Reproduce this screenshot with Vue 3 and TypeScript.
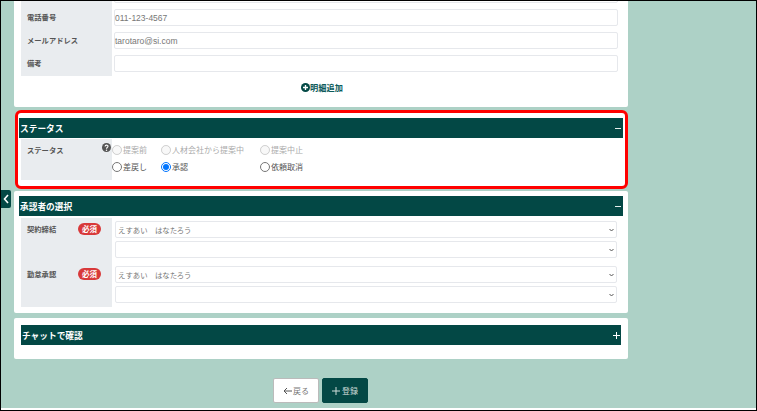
<script setup lang="ts">
const contacts: { label: string; value: string }[] = [
  { label: '電話番号', value: '011-123-4567' },
  { label: 'メールアドレス', value: 'tarotaro@si.com' },
  { label: '備考', value: '' },
]
const radios: { label: string; width: number; disabled: boolean; checked: boolean }[] = [
  { label: '提案前', width: 49, disabled: true, checked: false },
  { label: '人材会社から提案中', width: 99, disabled: true, checked: false },
  { label: '提案中止', width: 60, disabled: true, checked: false },
  { label: '差戻し', width: 49, disabled: false, checked: false },
  { label: '承認', width: 99, disabled: false, checked: true },
  { label: '依頼取消', width: 60, disabled: false, checked: false },
]
const approvers: string[] = ['契約締結', '勤怠承認']
</script>

<template>
  <div class="screen">
    <button class="side-tab" aria-label="閉じる">
      <svg width="6" height="10" viewBox="0 0 6 10"><path d="M5 1 1.5 5 5 9" fill="none" stroke="#fff" stroke-width="1.6" /></svg>
    </button>
    <main class="column">
      <section class="card contact-card">
        <div class="rows">
          <div class="labels contact-labels">
            <span v-for="c in contacts" :key="c.label" class="label-text contact-label">{{ c.label }}</span>
          </div>
          <div class="inputs">
            <input class="field" type="text" value="" />
            <input v-for="c in contacts" :key="c.label" class="field" type="text" :value="c.value" />
          </div>
        </div>
        <div class="add-row">
          <svg width="9" height="9" viewBox="0 0 10 10"><circle cx="5" cy="5" r="5" fill="#044a46" /><path d="M5 2.2v5.6M2.2 5h5.6" stroke="#fff" stroke-width="1.5" /></svg>
          <span>明細追加</span>
        </div>
      </section>

      <section class="card status-card">
        <header class="bar"><span>ステータス</span><span class="bar-sign minus"></span></header>
        <div class="status-body">
          <div class="labels status-label">
            <span class="label-text">ステータス</span>
            <svg class="help" width="9" height="9" viewBox="0 0 10 10"><circle cx="5" cy="5" r="5" fill="#555" /><path d="M3.4 3.8C3.5 1.9 6.7 1.9 6.7 3.7 6.7 5 5 5 5 6.3" fill="none" stroke="#fff" stroke-width="1.2" /><circle cx="5" cy="8" r=".8" fill="#fff" /></svg>
          </div>
          <div class="radios">
            <label v-for="r in radios" :key="r.label" class="radio" :class="{ off: r.disabled }" :style="{ width: r.width + 'px' }">
              <input type="radio" name="status" :disabled="r.disabled" :checked="r.checked" />
              <span>{{ r.label }}</span>
            </label>
          </div>
        </div>
      </section>

      <section class="card approver-card">
        <header class="bar"><span>承認者の選択</span><span class="bar-sign minus"></span></header>
        <div class="approver-body">
          <div v-for="a in approvers" :key="a" class="approver">
            <div class="labels approver-label">
              <span class="label-text">{{ a }}</span>
              <span class="badge">必須</span>
            </div>
            <div class="selects">
              <select class="field pick"><option>えすあい　はなたろう</option></select>
              <select class="field pick"><option></option></select>
            </div>
          </div>
        </div>
      </section>

      <section class="card chat-card">
        <header class="bar chat-bar"><span>チャットで確認</span><span class="bar-sign plus"></span></header>
      </section>

      <footer class="actions">
        <button class="btn back">
          <svg width="9" height="8" viewBox="0 0 9 8"><path d="M9 4H1M4 1 1 4l3 3" fill="none" stroke="#555" stroke-width="1" /></svg>
          <span>戻る</span>
        </button>
        <button class="btn save">
          <svg width="8" height="8" viewBox="0 0 8 8"><path d="M4 0v8M0 4h8" stroke="#cfdcd9" stroke-width="1" /></svg>
          <span>登録</span>
        </button>
      </footer>
    </main>
  </div>
</template>

<style scoped>
.screen {
  box-sizing: border-box;
  position: relative;
  width: 757px;
  height: 411px;
  overflow: hidden;
  background: #add1c6;
  border: 1px solid #000;
  box-shadow: inset 0 -2px 0 #fff;
  font-family: "Noto Sans CJK JP", "Noto Sans", sans-serif;
  color: #555;
}
.column {
  display: flex;
  flex-direction: column;
  width: 614px;
  margin: -16px 0 0 13px;
}
.card {
  box-sizing: border-box;
  background: #fff;
  border-radius: 2px;
}
.contact-card { height: 122px; padding: 11px 5px 0 7px; }
.rows { display: flex; gap: 2px; align-items: flex-start; }
.labels { background: #e9ecef; width: 91px; box-sizing: border-box; }
.contact-labels {
  display: flex;
  flex-direction: column;
  flex: none;
  padding-top: 10px;
  height: 80px;
}
.contact-label { flex: none; height: 23px; line-height: 23px; }
.inputs { display: flex; flex-direction: column; gap: 6px; width: 504px; margin-top: -10px; }
.label-text {
  font-size: 7.3px;
  font-weight: 700;
  padding-left: 6px;
  color: #555;
}
.field {
  box-sizing: border-box;
  display: block;
  width: 100%;
  height: 17px;
  padding: 0;
  border: 1px solid #e6e8ec;
  border-radius: 2px;
  background: #fff;
  font-family: "Liberation Sans", "Noto Sans CJK JP", sans-serif;
  font-size: 8.5px;
  color: #777;
  outline: none;
}
.add-row {
  display: flex;
  justify-content: center;
  align-items: center;
  margin-top: 5px;
  font-size: 8.2px;
  font-weight: 700;
  color: #0b5a5a;
}
.status-card {
  height: 79px;
  margin: 3px 0 0 1px;
  padding: 5px 2px 0 1px;
  border: 3px solid #f00;
  border-radius: 6px;
}
.bar {
  display: flex;
  justify-content: space-between;
  align-items: center;
  height: 20px;
  box-sizing: border-box;
  padding: 0 2px 0 1px;
  background: #034845;
  color: #fff;
  font-size: 8.7px;
  font-weight: 700;
}
.bar-sign { position: relative; width: 6px; height: 6px; }
.bar-sign::before {
  content: "";
  position: absolute;
  left: 0;
  top: 2.5px;
  width: 6px;
  height: 1px;
  background: #e6eeec;
}
.plus::after {
  content: "";
  position: absolute;
  left: 2.5px;
  top: 0;
  width: 1px;
  height: 6px;
  background: #fff;
}
.status-body { display: flex; margin-top: 1px; }
.status-label {
  position: relative;
  height: 41px;
  margin-left: 2px;
  padding-top: 1px;
  line-height: 12px;
}
.help { position: absolute; right: 1px; top: 4px; }
.radios {
  display: grid;
  grid-template-columns: repeat(3, max-content);
  align-content: start;
  row-gap: 4px;
  padding-top: 4px;
}
.radio {
  display: flex;
  align-items: center;
  height: 13px;
  font-size: 8px;
  color: #555;
  gap: 1px;
}
.radio.off { color: #aaa; }
.radio input { width: 10px; height: 10px; margin: 0; flex: none; }
.approver-card {
  height: 122px;
  margin-top: 2px;
  padding: 5px 5px 0;
}
.approver-body {
  display: flex;
  flex-direction: column;
  margin: 2px 0 0 2px;
}
.approver { display: flex; gap: 3px; }
.approver-label {
  display: flex;
  justify-content: space-between;
  align-items: flex-start;
  padding: 5px 11px 0 0;
  height: 45px;
}
.approver + .approver .approver-label { height: 44px; }
.approver-label .label-text { line-height: 12px; }
.badge {
  background: #d8393a;
  color: #fff;
  font-size: 7.5px;
  font-weight: 700;
  line-height: 12px;
  padding: 0 4px;
  border-radius: 6px;
}
.selects {
  display: flex;
  flex-direction: column;
  gap: 3px;
  width: 502px;
  padding-top: 3px;
}
.pick {
  appearance: none;
  font-family: "Noto Sans CJK JP", sans-serif;
  font-size: 7.4px;
  padding-left: 2px;
  color: #777;
  background: #fff url("data:image/svg+xml,%3Csvg xmlns='http://www.w3.org/2000/svg' width='5' height='4' viewBox='0 0 5 4'%3E%3Cpath d='M.5 1 2.5 3 4.5 1' fill='none' stroke='%23555' stroke-width='1'/%3E%3C/svg%3E") no-repeat right 2px center;
}
.chat-card { height: 41px; margin-top: 5px; padding: 7px 7px 0; }
.chat-bar { padding: 0 1px; }
.chat-bar .bar-sign { width: 7px; height: 7px; }
.chat-bar .bar-sign::before { width: 7px; top: 3px; background: #fff; }
.chat-bar .bar-sign::after { left: 3px; height: 7px; }
.actions { display: flex; justify-content: center; gap: 3px; margin-top: 19px; margin-left: -1px; }
.btn {
  box-sizing: border-box;
  display: flex;
  align-items: center;
  justify-content: center;
  width: 46px;
  height: 25px;
  border-radius: 2px;
  font-family: inherit;
  font-size: 8px;
  padding: 0;
}
.back { background: #fff; border: 1px solid #bbb; color: #777; gap: 1px; }
.save { background: #034845; border: 1px solid #034845; color: #cfdcd9; gap: 2px; }
.side-tab {
  position: absolute;
  left: 0;
  top: 189px;
  width: 10px;
  height: 18px;
  padding: 0;
  border: 0;
  border-radius: 0 2px 2px 0;
  background: #034845;
  display: flex;
  align-items: center;
  justify-content: center;
}
</style>
